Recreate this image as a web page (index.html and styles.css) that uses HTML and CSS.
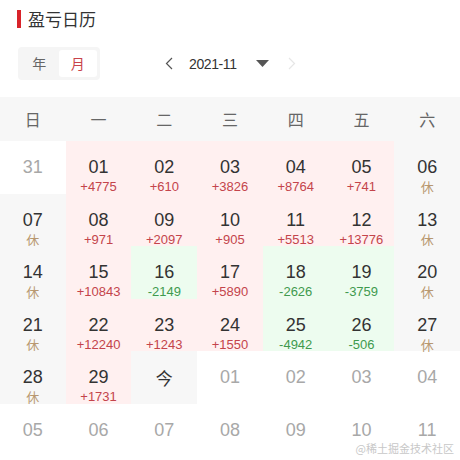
FILE: index.html
```html
<!DOCTYPE html>
<html lang="zh">
<head>
<meta charset="utf-8">
<link rel="stylesheet" href="styles.css">
</head>
<body>
<div class="page">
  <div class="title-row"><span class="bar"></span><span class="title">盈亏日历</span></div>
  <div class="toolbar">
    <div class="toggle"><span class="opt">年</span><span class="opt active">月</span></div>
    <div class="nav">
      <svg class="chev" width="8" height="13" viewBox="0 0 8 13"><path d="M7 1 L1.5 6.5 L7 12" fill="none" stroke="#555" stroke-width="1.2"/></svg>
      <span class="month">2021-11</span>
      <svg class="tri" width="13" height="7" viewBox="0 0 13 7"><path d="M0 0 H13 L6.5 7 Z" fill="#555"/></svg>
      <svg class="chev next" width="8" height="13" viewBox="0 0 8 13"><path d="M1 1 L6.5 6.5 L1 12" fill="none" stroke="#e6e6e6" stroke-width="1.2"/></svg>
    </div>
  </div>
  <div class="cal">
    <div class="wk">日</div><div class="wk">一</div><div class="wk">二</div><div class="wk">三</div><div class="wk">四</div><div class="wk">五</div><div class="wk">六</div>

    <div class="cell other"><span class="n">31</span></div>
    <div class="cell up"><span class="n">01</span><span class="v">+4775</span></div>
    <div class="cell up"><span class="n">02</span><span class="v">+610</span></div>
    <div class="cell up"><span class="n">03</span><span class="v">+3826</span></div>
    <div class="cell up"><span class="n">04</span><span class="v">+8764</span></div>
    <div class="cell up"><span class="n">05</span><span class="v">+741</span></div>
    <div class="cell rest"><span class="n">06</span><span class="v">休</span></div>

    <div class="cell rest"><span class="n">07</span><span class="v">休</span></div>
    <div class="cell up"><span class="n">08</span><span class="v">+971</span></div>
    <div class="cell up"><span class="n">09</span><span class="v">+2097</span></div>
    <div class="cell up"><span class="n">10</span><span class="v">+905</span></div>
    <div class="cell up"><span class="n">11</span><span class="v">+5513</span></div>
    <div class="cell up"><span class="n">12</span><span class="v">+13776</span></div>
    <div class="cell rest"><span class="n">13</span><span class="v">休</span></div>

    <div class="cell rest"><span class="n">14</span><span class="v">休</span></div>
    <div class="cell up"><span class="n">15</span><span class="v">+10843</span></div>
    <div class="cell down"><span class="n">16</span><span class="v">-2149</span></div>
    <div class="cell up"><span class="n">17</span><span class="v">+5890</span></div>
    <div class="cell down"><span class="n">18</span><span class="v">-2626</span></div>
    <div class="cell down"><span class="n">19</span><span class="v">-3759</span></div>
    <div class="cell rest"><span class="n">20</span><span class="v">休</span></div>

    <div class="cell rest"><span class="n">21</span><span class="v">休</span></div>
    <div class="cell up"><span class="n">22</span><span class="v">+12240</span></div>
    <div class="cell up"><span class="n">23</span><span class="v">+1243</span></div>
    <div class="cell up"><span class="n">24</span><span class="v">+1550</span></div>
    <div class="cell down"><span class="n">25</span><span class="v">-4942</span></div>
    <div class="cell down"><span class="n">26</span><span class="v">-506</span></div>
    <div class="cell rest"><span class="n">27</span><span class="v">休</span></div>

    <div class="cell rest"><span class="n">28</span><span class="v">休</span></div>
    <div class="cell up"><span class="n">29</span><span class="v">+1731</span></div>
    <div class="cell today"><span class="n cjk">今</span></div>
    <div class="cell other"><span class="n">01</span></div>
    <div class="cell other"><span class="n">02</span></div>
    <div class="cell other"><span class="n">03</span></div>
    <div class="cell other"><span class="n">04</span></div>

    <div class="cell other"><span class="n">05</span></div>
    <div class="cell other"><span class="n">06</span></div>
    <div class="cell other"><span class="n">07</span></div>
    <div class="cell other"><span class="n">08</span></div>
    <div class="cell other"><span class="n">09</span></div>
    <div class="cell other"><span class="n">10</span></div>
    <div class="cell other"><span class="n">11</span></div>
  </div>
  <div class="watermark">@稀土掘金技术社区</div>
</div>
</body>
</html>
```

FILE: styles.css
```css
* { box-sizing: border-box; }
html, body { margin: 0; padding: 0; background: #fff; }
body {
  font-family: "Liberation Sans", "Noto Sans CJK SC", sans-serif;
  color: #333;
  width: 460px;
  height: 460px;
  overflow: hidden;
}
.page { position: relative; width: 460px; height: 460px; }

.title-row {
  display: flex;
  align-items: center;
  height: 37px;
  padding: 0 0 0 17px;
}
.bar {
  width: 4px;
  height: 18px;
  background: #d8232a;
  margin-right: 7px;
}
.title {
  font-family: "Noto Sans CJK SC", sans-serif;
  font-size: 17px;
  color: #333;
  line-height: 20px;
}

.toolbar {
  display: flex;
  align-items: center;
  height: 60px;
  padding: 10px 0 17px 18px;
}
.toggle {
  display: flex;
  align-items: center;
  width: 82px;
  height: 33px;
  background: #f5f5f5;
  border-radius: 4px;
  padding: 2px 3px 2px 2px;
}
.opt {
  flex: 1;
  height: 27px;
  line-height: 27px;
  text-align: center;
  font-family: "Noto Sans CJK SC", sans-serif;
  font-size: 14px;
  color: #666;
  border-radius: 3px;
}
.opt.active {
  background: #fff;
  color: #c8424a;
}
.nav {
  display: flex;
  align-items: center;
  margin-left: 65px;
}
.chev { display: block; }
.month {
  font-size: 14px;
  color: #333;
  margin-left: 16px;
  letter-spacing: -0.4px;
}
.tri { display: block; margin-left: 19px; }
.chev.next { margin-left: 19px; }

.cal {
  display: grid;
  grid-template-columns: repeat(7, 1fr);
  grid-template-rows: 44px repeat(6, 52.5px);
}
.wk {
  background: #f7f7f7;
  font-family: "Noto Sans CJK SC", sans-serif;
  font-size: 16px;
  color: #666;
  display: flex;
  align-items: center;
  justify-content: center;
}
.cell {
  display: flex;
  flex-direction: column;
  align-items: center;
  padding-top: 16px;
}
.n {
  font-size: 18px;
  line-height: 21px;
  color: #333;
}
.n.cjk {
  font-family: "Noto Sans CJK SC", sans-serif;
  font-size: 17px;
}
.v {
  font-size: 13px;
  line-height: 16px;
  margin-top: 1px;
}
.up { background: #fff0f0; }
.up .v { color: #c4444b; }
.down { background: #edfcef; }
.down .v { color: #3f9a4e; }
.rest { background: #f7f7f7; }
.rest .v {
  color: #b89870;
  font-family: "Noto Sans CJK SC", sans-serif;
  font-size: 13px;
}
.today { background: #f7f7f7; }
.other .n { color: #a8a8a8; }

.watermark {
  position: absolute;
  right: 6px;
  bottom: 4px;
  font-family: "Noto Sans CJK SC", sans-serif;
  font-size: 11px;
  color: #c8c8c8;
}
```
